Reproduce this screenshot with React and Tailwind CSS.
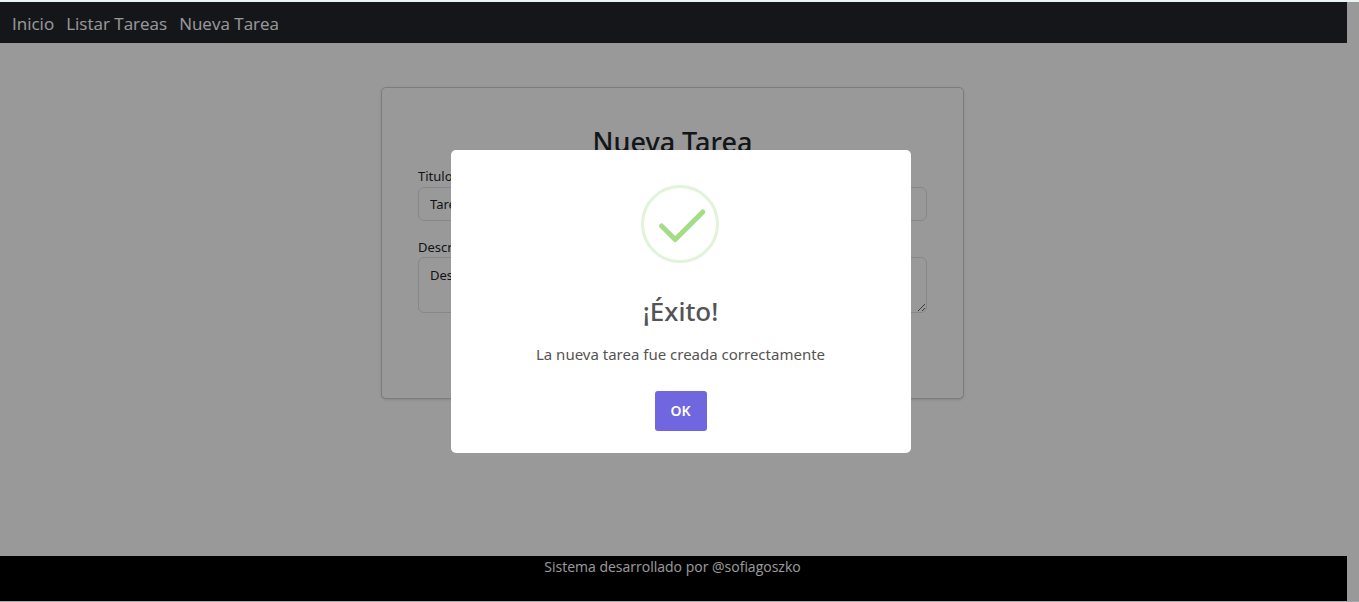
import { useState } from "react";

const links = ["Inicio", "Listar Tareas", "Nueva Tarea"];

function Navbar() {
  return (
    <nav className="flex h-[41px] items-center gap-3 bg-[#24262c] px-3 pt-[2px] font-['Open_Sans',sans-serif] text-[17px] text-white">
      {links.map((label) => (
        <a key={label} href="#" className="leading-6">
          {label}
        </a>
      ))}
    </nav>
  );
}

function TaskForm() {
  const field =
    "block w-full rounded-md border border-[#dee2e6] bg-white px-[11px] text-[13px] leading-5 text-[#212529]";
  return (
    <form className="w-full max-w-[583px] rounded-[5px] border border-[#cfcfcf] bg-white px-9 pt-9 pb-[85px] text-[#212529] shadow-sm">
      <h1 className="text-center text-[27px] leading-9 font-medium">Nueva Tarea</h1>
      <label htmlFor="titulo" className="mt-[6px] block text-[13px] leading-[21px]">
        Titulo
      </label>
      <input id="titulo" defaultValue="Tarea" className={`${field} h-[34px]`} />
      <label htmlFor="descripcion" className="mt-4 block text-[13px] leading-[20px]">
        Descripcion
      </label>
      <textarea
        id="descripcion"
        defaultValue="Descripcion"
        className={`${field} h-14 py-[7px]`}
      />
    </form>
  );
}

function SuccessIcon() {
  return (
    <svg viewBox="0 0 80 80" className="size-20" fill="none" aria-hidden="true">
      <circle cx="39" cy="40" r="37.5" stroke="#e1f3d8" strokeWidth="3" />
      <path
        d="M20.5 42 L34.2 55.5 L61.8 28"
        stroke="#a5dc86"
        strokeWidth="5"
        strokeLinecap="round"
        strokeLinejoin="round"
      />
    </svg>
  );
}

function SuccessDialog({ onClose }) {
  return (
    <div className="absolute inset-0 flex items-center justify-center bg-black/40 pl-[2px]">
      <div
        role="dialog"
        aria-modal="true"
        aria-labelledby="dialog-title"
        className="flex w-[460px] max-w-full flex-col items-center rounded-[5px] bg-white pt-[34px] pb-[22px] text-[#545454]"
      >
        <SuccessIcon />
        <h2 id="dialog-title" className="mt-[27px] text-[26px] leading-10 font-medium">
          ¡Éxito!
        </h2>
        <p className="mt-[11px] text-[15px] leading-6">La nueva tarea fue creada correctamente</p>
        <button
          type="button"
          onClick={onClose}
          className="mt-[25px] h-10 w-[52px] rounded-[3px] bg-[#7066e0] text-sm font-semibold text-white"
        >
          OK
        </button>
      </div>
    </div>
  );
}

export default function App() {
  const [open, setOpen] = useState(true);
  return (
    <div className="flex min-h-screen flex-col border-t-2 border-b border-t-[#eaf3f3] border-b-[#aaa6ae] bg-white font-['Noto_Sans',sans-serif]">
      <div className="relative flex grow flex-col">
        <div className="flex grow flex-col pr-3">
          <Navbar />
          <main className="flex grow items-start justify-center pt-11 pr-[2px]">
            <TaskForm />
          </main>
          <footer className="h-[45px] bg-black pr-[2px] text-center font-['Open_Sans',sans-serif] text-sm leading-[22px] text-white">
            Sistema desarrollado por @sofiagoszko
          </footer>
        </div>
        {open && <SuccessDialog onClose={() => setOpen(false)} />}
      </div>
    </div>
  );
}
